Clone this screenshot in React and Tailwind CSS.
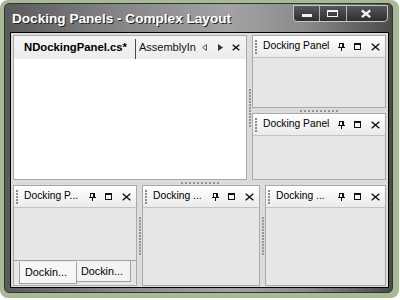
import React from "react";

function Pin() {
  return (
    <svg width="7" height="8" viewBox="0 0 7 8" className="shrink-0" shapeRendering="crispEdges">
      <rect x="1" y="0" width="5" height="1" fill="#111" />
      <rect x="1" y="0" width="1" height="5" fill="#111" />
      <rect x="4" y="0" width="2" height="5" fill="#111" />
      <rect x="0" y="4" width="7" height="1" fill="#111" />
      <rect x="3" y="5" width="1" height="3" fill="#111" />
    </svg>
  );
}

function Box() {
  return (
    <svg width="7" height="7" viewBox="0 0 7 7" className="shrink-0" shapeRendering="crispEdges">
      <rect x="0" y="0" width="7" height="2" fill="#111" />
      <rect x="0" y="0" width="1" height="7" fill="#111" />
      <rect x="6" y="0" width="1" height="7" fill="#111" />
      <rect x="0" y="6" width="7" height="1" fill="#111" />
    </svg>
  );
}

function Cross({ w = 9, h = 8 }) {
  return (
    <svg width={w} height={h} viewBox={`0 0 ${w} ${h}`} className="shrink-0">
      <path d={`M0.7 0.7 L${w - 0.7} ${h - 0.7} M${w - 0.7} 0.7 L0.7 ${h - 0.7}`} stroke="#111" strokeWidth="1.4" fill="none" />
    </svg>
  );
}

function HeaderGrip() {
  return (
    <div className="flex flex-col gap-[1px] shrink-0 ml-[2px]">
      {[0, 1, 2, 3, 4].map((i) => (
        <div key={i} className="w-[2px] h-[2px] bg-[#8c8c8c]" />
      ))}
    </div>
  );
}

function VGrip({ n = 13 }) {
  return (
    <div className="flex flex-col gap-[1px]">
      {Array.from({ length: n }).map((_, i) => (
        <div key={i} className="w-[2px] h-[2px] bg-[#939393]" />
      ))}
    </div>
  );
}

function HGrip({ n = 10 }) {
  return (
    <div className="flex flex-row gap-[2px]">
      {Array.from({ length: n }).map((_, i) => (
        <div key={i} className="w-[2px] h-[2px] bg-[#939393]" />
      ))}
    </div>
  );
}

function Panel({ title, className, children }) {
  return (
    <div className={`border border-[#a9a9a9] bg-[#e6e6e6] flex flex-col ${className}`}>
      <div className="h-[22px] shrink-0 border-b border-[#c4c4c4] bg-[linear-gradient(to_bottom,#ffffff,#ebebeb)] flex items-center">
        <HeaderGrip />
        <div className="ml-[6px] flex-1 min-w-0 whitespace-nowrap overflow-hidden text-[10.3px] leading-none text-black">
          {title}
        </div>
        <Pin />
        <div className="ml-[9px]">
          <Box />
        </div>
        <div className="ml-[10px] mr-[5px]">
          <Cross />
        </div>
      </div>
      <div className="flex-1" />
      {children}
    </div>
  );
}

function VSplit({ className = "" }) {
  return (
    <div className={`w-[5px] shrink-0 flex items-center justify-center ${className}`}>
      <VGrip />
    </div>
  );
}

function HSplit() {
  return (
    <div className="h-[5px] shrink-0 flex items-center justify-center">
      <HGrip />
    </div>
  );
}

function TitleButtons() {
  return (
    <div className="mt-[1px] mr-[4px] h-[17px] flex border border-[#c6c6c6] rounded-b-[4px] divide-x divide-[#b4b4b4] bg-[linear-gradient(to_bottom,#585858,#2e2e2e)] overflow-hidden">
      <div className="w-[26px] h-full">
        <svg width="26" height="15" viewBox="0 0 26 15" shapeRendering="crispEdges">
          <rect x="8" y="8" width="10" height="3" fill="#f2f2f2" />
        </svg>
      </div>
      <div className="w-[27px] h-full">
        <svg width="27" height="15" viewBox="0 0 27 15" shapeRendering="crispEdges">
          <rect x="7" y="4" width="11" height="2" fill="#f2f2f2" />
          <rect x="7" y="4" width="1" height="7" fill="#f2f2f2" />
          <rect x="17" y="4" width="1" height="7" fill="#f2f2f2" />
          <rect x="7" y="10" width="11" height="1" fill="#f2f2f2" />
        </svg>
      </div>
      <div className="w-[40px] h-full">
        <svg width="40" height="15" viewBox="0 0 40 15">
          <path d="M14.8 4.5 L23.2 11.2 M23.2 4.5 L14.8 11.2" stroke="#f4f4f4" strokeWidth="2.3" fill="none" />
        </svg>
      </div>
    </div>
  );
}

function DocPanel() {
  return (
    <div className="w-[234px] shrink-0 border border-[#a9a9a9] flex flex-col">
      <div className="h-[23px] shrink-0 bg-[linear-gradient(to_bottom,#f4f4f4,#ececec)] flex items-center">
        <div className="w-[121px] h-full shrink-0 flex items-center pl-[10px]">
          <span className="font-bold text-[11.3px] leading-none text-black whitespace-nowrap">NDockingPanel.cs*</span>
        </div>
        <div className="w-[1px] h-[20px] self-end bg-[#4a4a4a] shrink-0" />
        <div className="w-[64px] shrink-0 pl-[3px] text-[11px] leading-none text-[#111] whitespace-nowrap overflow-hidden">
          AssemblyIn
        </div>
        <svg width="5" height="7" viewBox="0 0 5 7" className="ml-[2px] shrink-0">
          <polygon points="4.5,0.5 0.7,3.5 4.5,6.5" fill="none" stroke="#555" strokeWidth="1" />
        </svg>
        <svg width="5" height="7" viewBox="0 0 5 7" className="ml-[11px] shrink-0">
          <polygon points="0,0 5,3.5 0,7" fill="#333" />
        </svg>
        <div className="ml-[9px]">
          <Cross w={8} h={7} />
        </div>
      </div>
      <div className="flex-1 bg-white" />
    </div>
  );
}

export default function App() {
  return (
    <div className="w-[400px] h-[300px] bg-white font-['Liberation_Sans',Arial,sans-serif]">
      <div className="w-[399px] h-[298px] bg-[#a7b995] rounded-[8px] pt-[3px] pl-[4px] pr-[6px] pb-[5px]">
        <div className="w-[389px] h-[290px] border border-[#343434] rounded-[5px] bg-[linear-gradient(to_right,#5a5a5a_0%,#868686_30%,#a3a3a3_58%,#8a8a8a_78%,#4a4a4a_100%)] flex flex-col">
          <div className="h-[28px] shrink-0 flex justify-between items-start">
            <div className="pl-[7px] pt-[8px] text-white font-bold text-[13.6px] leading-[14px] whitespace-nowrap [text-shadow:1px_1px_0_#262626]">
              Docking Panels - Complex Layout
            </div>
            <TitleButtons />
          </div>
          <div className="ml-[5px] w-[379px] h-[256px] shrink-0 border border-black bg-[#dcdcdc] pt-[2px] pl-[2px] pr-[2px] pb-[1px] flex flex-col">
            <div className="h-[145px] shrink-0 flex">
              <DocPanel />
              <VSplit />
              <div className="w-[134px] shrink-0 flex flex-col">
                <Panel title="Docking Panel" className="h-[73px] shrink-0" />
                <HSplit />
                <Panel title="Docking Panel" className="h-[67px] shrink-0" />
              </div>
            </div>
            <HSplit />
            <div className="h-[101px] shrink-0 flex">
              <Panel title="Docking P..." className="w-[124px] shrink-0">
                <div className="h-[25px] shrink-0 border-t border-[#a0a0a0] flex items-start">
                  <div className="ml-[5px] mt-[1px] w-[58px] h-[22px] border-x border-b border-[#a0a0a0] bg-[#f6f6f6] flex items-center pl-[5px] text-[10.8px] leading-none text-black whitespace-nowrap">
                    Dockin...
                  </div>
                  <div className="w-[54px] h-[21px] border-r border-b border-[#a0a0a0] bg-[#f3f3f3] flex items-center pl-[4px] text-[10.8px] leading-none text-black whitespace-nowrap">
                    Dockin...
                  </div>
                </div>
              </Panel>
              <VSplit />
              <Panel title="Docking ..." className="w-[118px] shrink-0" />
              <VSplit />
              <Panel title="Docking ..." className="w-[121px] shrink-0" />
            </div>
          </div>
        </div>
      </div>
    </div>
  );
}
